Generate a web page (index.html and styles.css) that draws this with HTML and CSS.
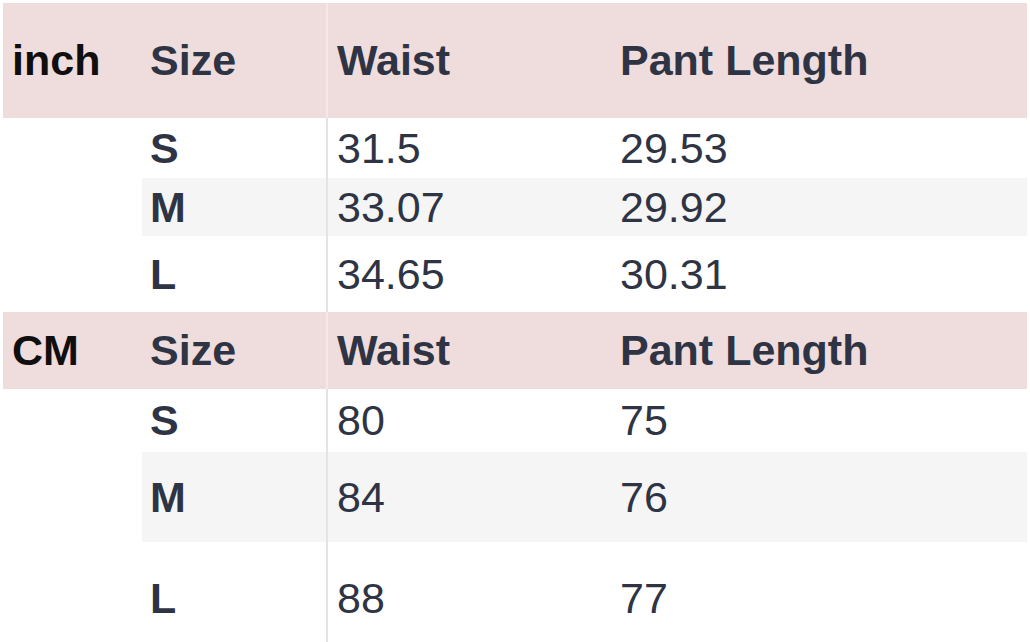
FILE: index.html
```html
<!DOCTYPE html>
<html>
<head>
<meta charset="utf-8">
<link rel="stylesheet" href="styles.css">
</head>
<body>
<table class="chart">
  <colgroup>
    <col class="c-unit">
    <col class="c-size">
    <col class="c-waist">
    <col class="c-len">
  </colgroup>
  <tbody>
    <tr class="head h1">
      <th class="unit">inch</th>
      <th class="size">Size</th>
      <th class="waist">Waist</th>
      <th class="len">Pant Length</th>
    </tr>
    <tr class="row r-s1">
      <td class="blank" rowspan="3"></td>
      <td class="size">S</td>
      <td class="waist">31.5</td>
      <td class="len">29.53</td>
    </tr>
    <tr class="row alt r-m1">
      <td class="size">M</td>
      <td class="waist">33.07</td>
      <td class="len">29.92</td>
    </tr>
    <tr class="row r-l1">
      <td class="size">L</td>
      <td class="waist">34.65</td>
      <td class="len">30.31</td>
    </tr>
    <tr class="head h2">
      <th class="unit">CM</th>
      <th class="size">Size</th>
      <th class="waist">Waist</th>
      <th class="len">Pant Length</th>
    </tr>
    <tr class="row r-s2">
      <td class="blank" rowspan="3"></td>
      <td class="size">S</td>
      <td class="waist">80</td>
      <td class="len">75</td>
    </tr>
    <tr class="row alt r-m2">
      <td class="size">M</td>
      <td class="waist">84</td>
      <td class="len">76</td>
    </tr>
    <tr class="row r-l2">
      <td class="size">L</td>
      <td class="waist">88</td>
      <td class="len">77</td>
    </tr>
  </tbody>
</table>
</body>
</html>
```

FILE: styles.css
```css
html, body {
  margin: 0;
  padding: 0;
  background: #ffffff;
}

body {
  padding: 3px 3px 0 3px;
  height: 642px;
  box-sizing: border-box;
  overflow: hidden;
}

.chart {
  width: 1024px;
  table-layout: fixed;
  border-collapse: collapse;
  border-spacing: 0;
  font-family: "Liberation Sans", Arial, sans-serif;
  font-size: 43px;
  color: #2e3444;
}

.c-unit { width: 139px; }
.c-size { width: 185px; }
.c-waist { width: 283px; }
.c-len { width: 417px; }

.chart th,
.chart td {
  padding: 0;
  vertical-align: middle;
  text-align: left;
  white-space: nowrap;
  line-height: 1;
}

.chart th {
  font-weight: 700;
}

.head th {
  background: #efdcdc;
}

.head .unit {
  color: #0f0f0f;
}

.chart .unit { padding-left: 9px; }
.chart .size { padding-left: 8px; font-weight: 700; }
.chart .waist { padding-left: 9px; border-left: 2px solid #e4e4e4; }
.chart .len { padding-left: 10px; }

.head .waist { border-left-color: #f5e8e8; }

.chart td { font-weight: 400; }
.chart td.size { font-weight: 700; }

.row td { background: #ffffff; }
.alt td { background: #f5f5f5; }
.chart td.blank { background: #ffffff; }

.h1 { height: 115px; }
.r-s1 { height: 60px; }
.r-m1 { height: 58px; }
.r-l1 { height: 76px; }
.h2 { height: 77px; }
.r-s2 { height: 63px; }
.r-m2 { height: 90px; }
.r-l2 { height: 112px; }
```
